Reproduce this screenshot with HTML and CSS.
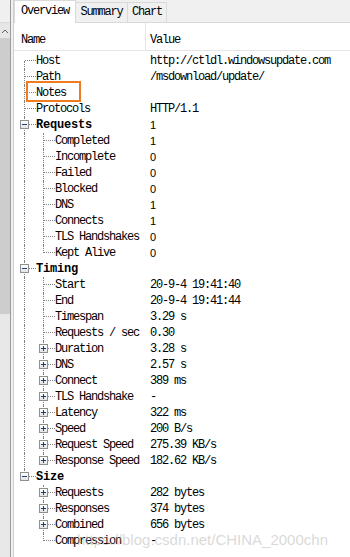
FILE: index.html
```html
<!DOCTYPE html>
<html>
<head>
<meta charset="utf-8">
<link rel="stylesheet" href="styles.css">
</head>
<body>
<div class="side">
  <div class="side-top"></div>
  <div class="side-btn"><svg width="10" height="15" viewBox="0 0 10 15"><path d="M2 10 L5 7 L8 10" fill="none" stroke="#606060" stroke-width="1"/></svg></div>
  <div class="side-thumb"></div>
  <div class="side-track"></div>
</div>
<div class="sep"></div>
<div class="main">
  <div class="tabs">
    <div class="tab sel w-ov">Overview</div>
    <div class="tab w-su">Summary</div>
    <div class="tab w-ch">Chart</div>
  </div>
  <div class="head">
    <div class="hname">Name</div>
    <div class="hval">Value</div>
  </div>
  <div class="rows">
    <div class="row"><div class="name"><span class="g first"></span><span class="t">Host</span></div><div class="val">http://ctldl.windowsupdate.com</div></div>
    <div class="row"><div class="name"><span class="g tee"></span><span class="t">Path</span></div><div class="val">/msdownload/update/</div></div>
    <div class="row"><div class="name"><span class="g tee"></span><span class="t">Notes</span></div><div class="val"></div></div>
    <div class="row"><div class="name"><span class="g tee"></span><span class="t">Protocols</span></div><div class="val">HTTP/1.1</div></div>
    <div class="row"><div class="name"><span class="g tee"><span class="box minus"></span></span><span class="t b">Requests</span></div><div class="val sans">1</div></div>
    <div class="row"><div class="name"><span class="g pass"></span><span class="g tee"></span><span class="t">Completed</span></div><div class="val sans">1</div></div>
    <div class="row"><div class="name"><span class="g pass"></span><span class="g tee"></span><span class="t">Incomplete</span></div><div class="val sans">0</div></div>
    <div class="row"><div class="name"><span class="g pass"></span><span class="g tee"></span><span class="t">Failed</span></div><div class="val sans">0</div></div>
    <div class="row"><div class="name"><span class="g pass"></span><span class="g tee"></span><span class="t">Blocked</span></div><div class="val sans">0</div></div>
    <div class="row"><div class="name"><span class="g pass"></span><span class="g tee"></span><span class="t">DNS</span></div><div class="val sans">1</div></div>
    <div class="row"><div class="name"><span class="g pass"></span><span class="g tee"></span><span class="t">Connects</span></div><div class="val sans">1</div></div>
    <div class="row"><div class="name"><span class="g pass"></span><span class="g tee"></span><span class="t">TLS Handshakes</span></div><div class="val sans">0</div></div>
    <div class="row"><div class="name"><span class="g pass"></span><span class="g last"></span><span class="t">Kept Alive</span></div><div class="val sans">0</div></div>
    <div class="row"><div class="name"><span class="g tee"><span class="box minus"></span></span><span class="t b">Timing</span></div><div class="val"></div></div>
    <div class="row"><div class="name"><span class="g pass"></span><span class="g tee"></span><span class="t">Start</span></div><div class="val">20-9-4 19:41:40</div></div>
    <div class="row"><div class="name"><span class="g pass"></span><span class="g tee"></span><span class="t">End</span></div><div class="val">20-9-4 19:41:44</div></div>
    <div class="row"><div class="name"><span class="g pass"></span><span class="g tee"></span><span class="t">Timespan</span></div><div class="val">3.29 s</div></div>
    <div class="row"><div class="name"><span class="g pass"></span><span class="g tee"></span><span class="t">Requests / sec</span></div><div class="val">0.30</div></div>
    <div class="row"><div class="name"><span class="g pass"></span><span class="g tee"><span class="box plus"></span></span><span class="t">Duration</span></div><div class="val">3.28 s</div></div>
    <div class="row"><div class="name"><span class="g pass"></span><span class="g tee"><span class="box plus"></span></span><span class="t">DNS</span></div><div class="val">2.57 s</div></div>
    <div class="row"><div class="name"><span class="g pass"></span><span class="g tee"><span class="box plus"></span></span><span class="t">Connect</span></div><div class="val">389 ms</div></div>
    <div class="row"><div class="name"><span class="g pass"></span><span class="g tee"><span class="box plus"></span></span><span class="t">TLS Handshake</span></div><div class="val">-</div></div>
    <div class="row"><div class="name"><span class="g pass"></span><span class="g tee"><span class="box plus"></span></span><span class="t">Latency</span></div><div class="val">322 ms</div></div>
    <div class="row"><div class="name"><span class="g pass"></span><span class="g tee"><span class="box plus"></span></span><span class="t">Speed</span></div><div class="val">200 B/s</div></div>
    <div class="row"><div class="name"><span class="g pass"></span><span class="g tee"><span class="box plus"></span></span><span class="t">Request Speed</span></div><div class="val">275.39 KB/s</div></div>
    <div class="row"><div class="name"><span class="g pass"></span><span class="g last"><span class="box plus"></span></span><span class="t">Response Speed</span></div><div class="val">182.62 KB/s</div></div>
    <div class="row"><div class="name"><span class="g last"><span class="box minus"></span></span><span class="t b">Size</span></div><div class="val"></div></div>
    <div class="row"><div class="name"><span class="g empty"></span><span class="g tee"><span class="box plus"></span></span><span class="t">Requests</span></div><div class="val">282 bytes</div></div>
    <div class="row"><div class="name"><span class="g empty"></span><span class="g tee"><span class="box plus"></span></span><span class="t">Responses</span></div><div class="val">374 bytes</div></div>
    <div class="row"><div class="name"><span class="g empty"></span><span class="g tee"><span class="box plus"></span></span><span class="t">Combined</span></div><div class="val">656 bytes</div></div>
    <div class="row"><div class="name"><span class="g empty"></span><span class="g last"></span><span class="t">Compression</span></div><div class="val">-</div></div>
  </div>
  <div class="highlight"></div>
  <div class="watermark">https://blog.csdn.net/CHINA_2000chn</div>
</div>
</body>
</html>
```

FILE: styles.css
```css
html, body {
  margin: 0;
  padding: 0;
}
body {
  width: 350px;
  height: 557px;
  overflow: hidden;
  display: flex;
  background: #fff;
  font-family: "Liberation Mono", monospace;
  font-size: 12px;
  color: #000;
}
.side {
  width: 10px;
  display: flex;
  flex-direction: column;
  background: #f0f0f0;
}
.side-top {
  height: 22px;
  background: #f0f0f0;
  border-bottom: 1px solid #d9d9d9;
}
.side-btn {
  height: 15px;
  background: #e6e6e6;
}
.side-btn svg {
  display: block;
}
.side-thumb {
  height: 276px;
  background: #cdcdcd;
}
.side-track {
  flex: 1;
  background: #e8e8e8;
}
.sep {
  width: 4px;
  box-sizing: border-box;
  border-left: 1px solid #9c9c9c;
  border-right: 1px solid #cfcfcf;
  background: #f0f0f0;
}
.main {
  flex: 1;
  position: relative;
  display: flex;
  flex-direction: column;
}
.tabs {
  height: 23px;
  box-sizing: border-box;
  background: #f0f0f0;
  border-bottom: 1px solid #d9d9d9;
  display: flex;
  align-items: flex-end;
}
.tab {
  box-sizing: border-box;
  height: 20px;
  border: 1px solid #d9d9d9;
  border-bottom: none;
  border-left: none;
  text-align: center;
  line-height: 19px;
  letter-spacing: -1.2px;
}
.tab.sel {
  height: 23px;
  background: #fff;
  border-left: 1px solid #d9d9d9;
  margin-bottom: -1px;
  line-height: 20px;
}
.w-ov { width: 62px; }
.w-su { width: 52px; }
.w-ch { width: 39px; }
.head {
  display: flex;
  height: 27px;
  border-bottom: 1px solid #e5e5e5;
  margin-bottom: 2px;
}
.hname {
  width: 132px;
  box-sizing: border-box;
  border-right: 1px solid #e5e5e5;
  padding: 9px 0 0 7px;
  line-height: 16px;
  letter-spacing: -1.2px;
}
.hval {
  padding: 9px 0 0 4px;
  line-height: 16px;
  letter-spacing: -1.2px;
}
.rows {
  display: flex;
  flex-direction: column;
}
.row {
  display: flex;
  height: 16px;
  line-height: 16px;
}
.name {
  width: 132px;
  box-sizing: border-box;
  padding-left: 3px;
  display: flex;
  white-space: nowrap;
}
.val {
  padding-left: 4px;
  white-space: nowrap;
  letter-spacing: -1.2px;
}
.val.sans {
  font-family: "Liberation Sans", sans-serif;
  font-size: 11px;
  letter-spacing: 0;
}
.t {
  letter-spacing: -1.2px;
}
.t.b {
  font-weight: bold;
  letter-spacing: -0.2px;
}
.g {
  position: relative;
  display: flex;
  width: 19px;
  height: 16px;
  flex: none;
}
.g::before {
  content: "";
  width: 8px;
  box-sizing: border-box;
  height: 16px;
}
.g::after {
  content: "";
  width: 11px;
  box-sizing: border-box;
  height: 8px;
}
.g.tee::before,
.g.pass::before {
  border-right: 1px dotted #808080;
}
.g.last::before {
  height: 8px;
  border-right: 1px dotted #808080;
}
.g.first::before {
  height: 8px;
  align-self: flex-end;
  border-right: 1px dotted #808080;
}
.g.tee::after,
.g.last::after,
.g.first::after {
  border-bottom: 1px dotted #808080;
}
.box {
  position: absolute;
  left: 3px;
  top: 3px;
  width: 9px;
  height: 9px;
  box-sizing: border-box;
  border: 1px solid #8e8f8f;
  background: linear-gradient(#ffffff, #e2e4e8);
  display: grid;
  place-items: center;
}
.box::before {
  content: "";
  grid-area: 1 / 1;
  width: 5px;
  height: 1px;
  background: #1f3f75;
}
.box.plus::after {
  content: "";
  grid-area: 1 / 1;
  width: 1px;
  height: 5px;
  background: #1f3f75;
}
.highlight {
  position: absolute;
  left: 12px;
  top: 81px;
  width: 55px;
  height: 21px;
  box-sizing: border-box;
  border: 2px solid #f07c22;
}
.watermark {
  position: absolute;
  left: 63px;
  top: 531px;
  font-family: "Liberation Sans", sans-serif;
  font-size: 15px;
  line-height: 18px;
  color: rgba(185, 185, 185, 0.55);
  white-space: nowrap;
}
```
